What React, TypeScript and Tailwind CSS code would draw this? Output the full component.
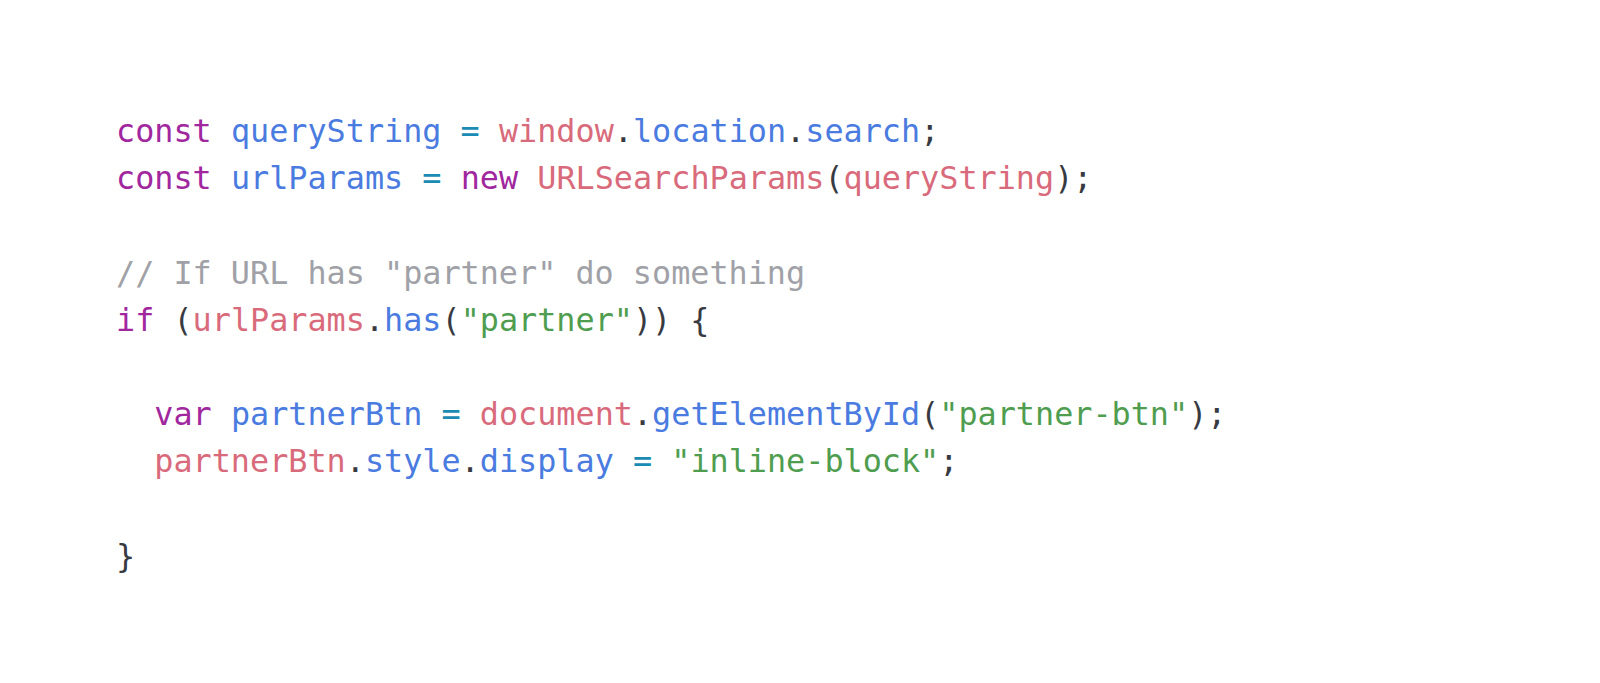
const kw = "text-[#a1279e]";
const vr = "text-[#4a7be0]";
const rd = "text-[#d96a7b]";
const st = "text-[#4f9d4f]";
const op = "text-[#1a8bb3]";
const pn = "text-[#383a42]";

type Tok = [string, string];

const lines: Tok[][] = [
  [[kw, "const"], [pn, " "], [vr, "queryString"], [pn, " "], [op, "="], [pn, " "], [rd, "window"], [pn, "."], [vr, "location"], [pn, "."], [vr, "search"], [pn, ";"]],
  [[kw, "const"], [pn, " "], [vr, "urlParams"], [pn, " "], [op, "="], [pn, " "], [kw, "new"], [pn, " "], [rd, "URLSearchParams"], [pn, "("], [rd, "queryString"], [pn, ");"]],
  [],
  [["text-[#a0a1a7]", '// If URL has "partner" do something']],
  [[kw, "if"], [pn, " ("], [rd, "urlParams"], [pn, "."], [vr, "has"], [pn, "("], [st, '"partner"'], [pn, ")) {"]],
  [],
  [[pn, "  "], [kw, "var"], [pn, " "], [vr, "partnerBtn"], [pn, " "], [op, "="], [pn, " "], [rd, "document"], [pn, "."], [vr, "getElementById"], [pn, "("], [st, '"partner-btn"'], [pn, ");"]],
  [[pn, "  "], [rd, "partnerBtn"], [pn, "."], [vr, "style"], [pn, "."], [vr, "display"], [pn, " "], [op, "="], [pn, " "], [st, '"inline-block"'], [pn, ";"]],
  [],
  [[pn, "}"]],
];

export default function App() {
  return (
    <div className="w-[1600px] h-[683px] bg-white overflow-hidden">
      <pre className="pl-[116px] pt-[107px] text-[31.8px] leading-[47.2px] font-['DejaVu_Sans_Mono',monospace] whitespace-pre">
        {lines.map((line, i) => (
          <div key={i} className="h-[47.2px]">
            {line.map(([c, t], j) => (
              <span key={j} className={c}>
                {t}
              </span>
            ))}
          </div>
        ))}
      </pre>
    </div>
  );
}
